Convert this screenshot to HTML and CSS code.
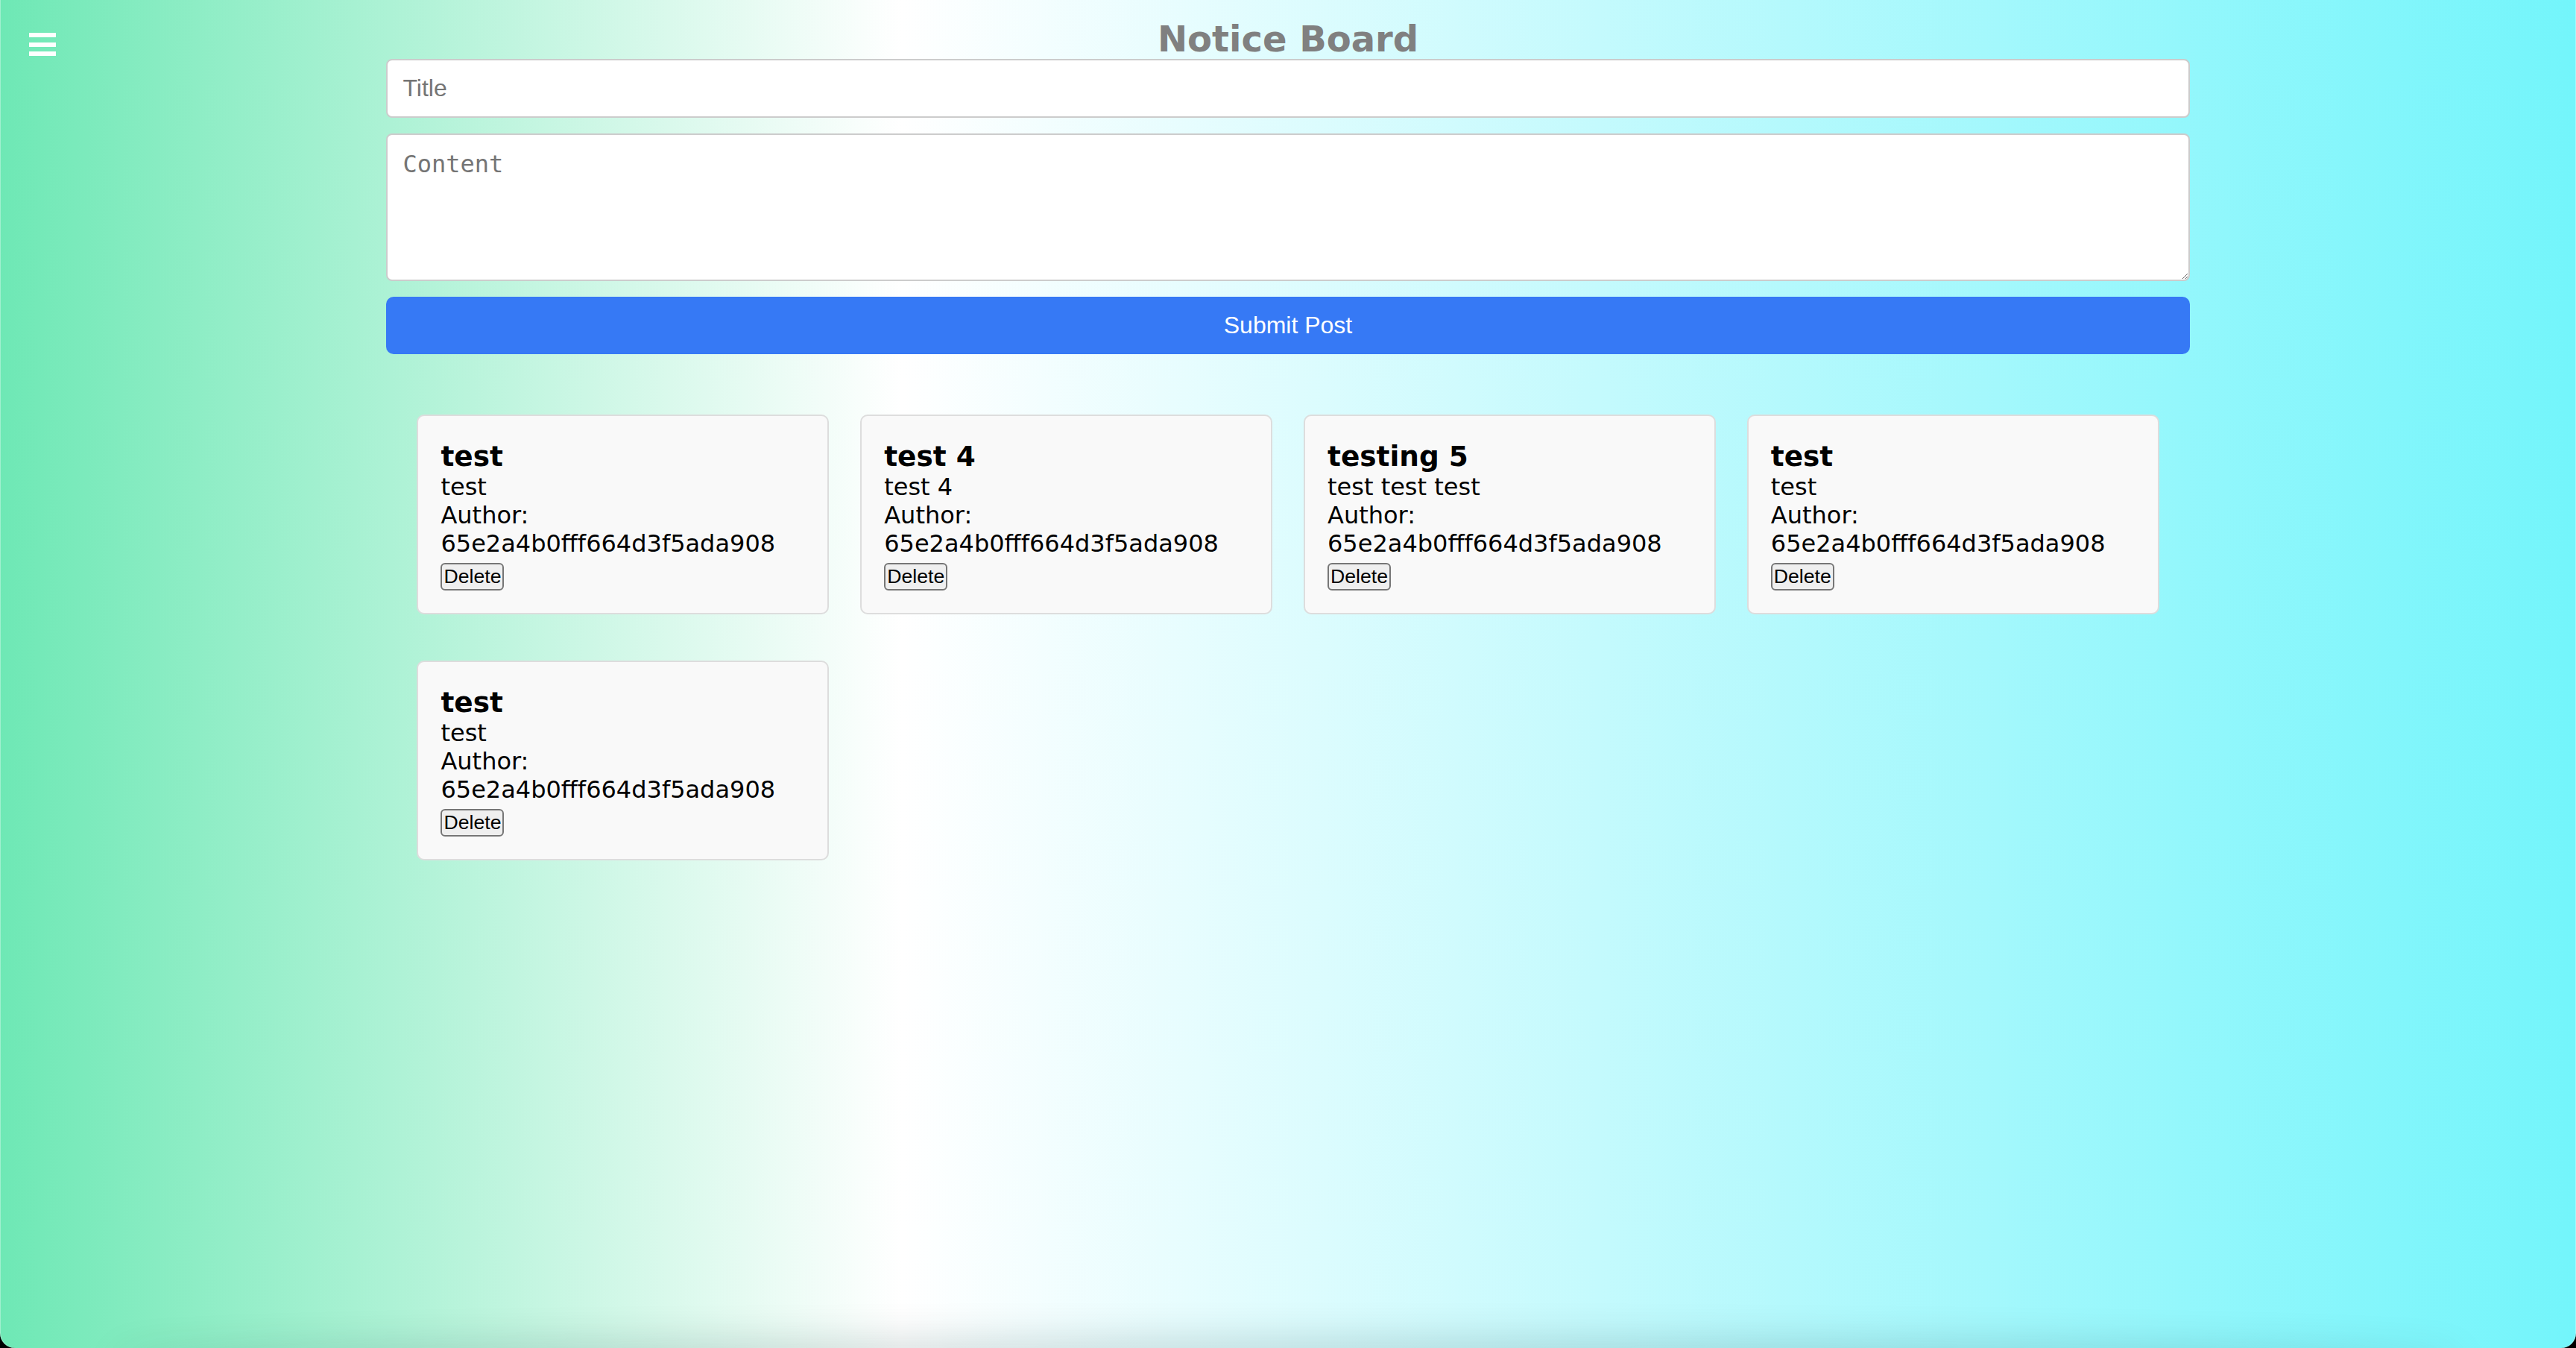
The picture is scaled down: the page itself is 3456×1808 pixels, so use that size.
FILE: index.html
```html
<!DOCTYPE html>
<html lang="en">
<head>
<meta charset="utf-8">
<title>Notice Board</title>
<link rel="stylesheet" href="styles.css">
</head>
<body>
<div class="page">
  <button class="menu-btn" aria-label="Menu">
    <span class="bar"></span><span class="bar"></span><span class="bar"></span>
  </button>
  <h1 class="title">Notice Board</h1>
  <form class="post-form">
    <input class="field" type="text" placeholder="Title">
    <textarea class="field area" placeholder="Content"></textarea>
    <button class="submit" type="button">Submit Post</button>
  </form>
  <div class="posts">
    <div class="card">
      <h3 class="card-title">test</h3>
      <p class="card-text">test</p>
      <p class="card-text">Author: 65e2a4b0fff664d3f5ada908</p>
      <button class="del" type="button">Delete</button>
    </div>
    <div class="card">
      <h3 class="card-title">test 4</h3>
      <p class="card-text">test 4</p>
      <p class="card-text">Author: 65e2a4b0fff664d3f5ada908</p>
      <button class="del" type="button">Delete</button>
    </div>
    <div class="card">
      <h3 class="card-title">testing 5</h3>
      <p class="card-text">test test test</p>
      <p class="card-text">Author: 65e2a4b0fff664d3f5ada908</p>
      <button class="del" type="button">Delete</button>
    </div>
    <div class="card">
      <h3 class="card-title">test</h3>
      <p class="card-text">test</p>
      <p class="card-text">Author: 65e2a4b0fff664d3f5ada908</p>
      <button class="del" type="button">Delete</button>
    </div>
    <div class="card">
      <h3 class="card-title">test</h3>
      <p class="card-text">test</p>
      <p class="card-text">Author: 65e2a4b0fff664d3f5ada908</p>
      <button class="del" type="button">Delete</button>
    </div>
  </div>
</div>
</body>
</html>
```
FILE: styles.css
```css
html {
  background: #000;
}
body {
  margin: 0;
  font-family: "DejaVu Sans", Verdana, sans-serif;
}
.page {
  position: relative;
  height: 1808px;
  overflow: hidden;
  border-radius: 0 0 20px 20px;
  background: linear-gradient(to right, #6ee8b5 0%, #ffffff 35%, #c4fafd 62%, #73f5fb 100%);
  box-shadow: inset 1px 0 0 rgba(255,255,255,0.35), inset -1px 0 0 rgba(255,255,255,0.35);
}
.page::after {
  content: "";
  position: absolute;
  left: 160px;
  right: 160px;
  bottom: -30px;
  height: 30px;
  border-radius: 50%;
  box-shadow: 0 0 50px 14px rgba(0, 50, 50, 0.16);
  pointer-events: none;
}
.menu-btn {
  position: absolute;
  left: 39px;
  top: 44px;
  width: 36px;
  height: 31px;
  padding: 0;
  border: 0;
  background: transparent;
  display: flex;
  flex-direction: column;
  justify-content: space-between;
}
.bar {
  display: block;
  height: 6px;
  width: 36px;
  background: #fff;
}
.title {
  margin: 0;
  padding-top: 24px;
  font-size: 48px;
  line-height: 56px;
  font-weight: bold;
  color: #808080;
  text-align: center;
}
.post-form {
  width: 70%;
  margin: -1px auto 0;
  display: flex;
  flex-direction: column;
  gap: 21px;
}
.field {
  box-sizing: border-box;
  width: 100%;
  height: 79px;
  padding: 0 20px;
  border: 2px solid #cccccc;
  border-radius: 8px;
  background: #fff;
  font-family: "Liberation Sans", Arial, sans-serif;
  font-size: 32px;
  color: #000;
  outline: none;
  margin: 0;
}
.field::placeholder {
  color: #757575;
}
.area {
  height: 198px;
  padding: 20px;
  font-family: "DejaVu Sans Mono", monospace;
  font-size: 32px;
  resize: vertical;
}
.submit {
  height: 77px;
  width: 100%;
  border: 0;
  border-radius: 10px;
  background: #3679f5;
  color: #fff;
  font-family: "Liberation Sans", Arial, sans-serif;
  font-size: 32px;
  margin: 0;
}
.posts {
  box-sizing: border-box;
  width: 70%;
  margin: 81px auto 0;
  padding: 0 41px;
  display: grid;
  grid-template-columns: repeat(4, 1fr);
  column-gap: 42px;
  row-gap: 62px;
}
.card {
  box-sizing: border-box;
  background: #f9f9f9;
  border: 2px solid #dddddd;
  border-radius: 10px;
  padding: 32px 30px 30px;
}
.card-title {
  margin: 0;
  font-size: 37.44px;
  line-height: 44px;
  font-weight: bold;
  color: #000;
}
.card-text {
  margin: 0;
  font-size: 32px;
  line-height: 38px;
  color: #000;
}
.del {
  display: block;
  margin-top: 7px;
  height: 37px;
  padding: 0 2px;
  border: 2px solid #767676;
  border-radius: 6px;
  background: #efefef;
  font-family: "Liberation Sans", Arial, sans-serif;
  font-size: 26.67px;
  color: #000;
}
```
